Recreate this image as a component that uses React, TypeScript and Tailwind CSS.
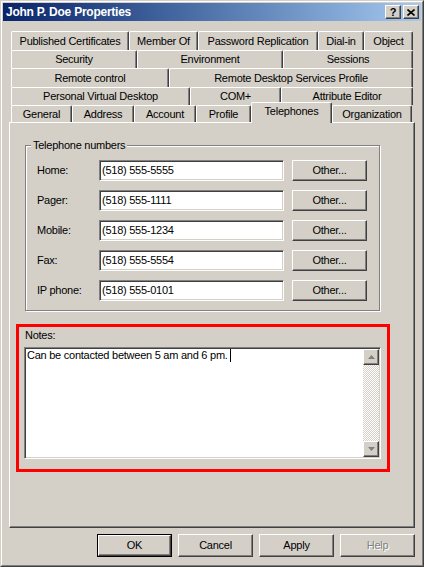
import React from 'react';

const raised =
  'border border-t-white border-l-white border-r-[#404040] border-b-[#404040] shadow-[inset_-1px_-1px_0_#808080]';
const sunken =
  'border border-t-[#808080] border-l-[#808080] border-r-white border-b-white shadow-[inset_1px_1px_0_#404040,inset_-1px_-1px_0_#d4d0c8]';

type TabDef = { label: string; w: string; selected?: boolean };

const tabRows: { h: string; tabs: TabDef[] }[] = [
  {
    h: 'h-[19px]',
    tabs: [
      { label: 'Published Certificates', w: 'w-[118px]' },
      { label: 'Member Of', w: 'w-[69px]' },
      { label: 'Password Replication', w: 'w-[120px]' },
      { label: 'Dial-in', w: 'w-[46px]' },
      { label: 'Object', w: 'w-[49px]' },
    ],
  },
  {
    h: 'h-[18px]',
    tabs: [
      { label: 'Security', w: 'w-[126px]' },
      { label: 'Environment', w: 'w-[146px]' },
      { label: 'Sessions', w: 'w-[130px]' },
    ],
  },
  {
    h: 'h-[19px]',
    tabs: [
      { label: 'Remote control', w: 'w-[158px]' },
      { label: 'Remote Desktop Services Profile', w: 'w-[244px]' },
    ],
  },
  {
    h: 'h-[18px]',
    tabs: [
      { label: 'Personal Virtual Desktop', w: 'w-[179px]' },
      { label: 'COM+', w: 'w-[91px]' },
      { label: 'Attribute Editor', w: 'w-[132px]' },
    ],
  },
  {
    h: 'h-[17px]',
    tabs: [
      { label: 'General', w: 'w-[61px]' },
      { label: 'Address', w: 'w-[62px]' },
      { label: 'Account', w: 'w-[62px]' },
      { label: 'Profile', w: 'w-[55px]' },
      { label: 'Telephones', w: 'w-[81px]', selected: true },
      { label: 'Organization', w: 'w-[80px]' },
    ],
  },
];

const phones = [
  { label: 'Home:', value: '(518) 555-5555' },
  { label: 'Pager:', value: '(518) 555-1111' },
  { label: 'Mobile:', value: '(518) 555-1234' },
  { label: 'Fax:', value: '(518) 555-5554' },
  { label: 'IP phone:', value: '(518) 555-0101' },
];

function Tab({ tab }: { tab: TabDef }) {
  if (tab.selected) {
    return (
      <div
        className={`${tab.w} h-[21px] -mb-px relative z-10 bg-[#d4d0c8] flex items-center justify-center pb-[4px] border-t border-l border-r border-t-white border-l-white border-r-[#404040] shadow-[inset_-1px_0_0_#808080] rounded-t-[2px] whitespace-nowrap`}
      >
        {tab.label}
      </div>
    );
  }
  return (
    <div
      className={`${tab.w} h-full flex items-center justify-center border-t border-l border-r border-t-white border-l-white border-r-[#404040] shadow-[inset_-1px_0_0_#808080] rounded-t-[2px] whitespace-nowrap`}
    >
      {tab.label}
    </div>
  );
}

function ArrowUp() {
  return (
    <svg width="7" height="4" viewBox="0 0 7 4">
      <path d="M3.5 0L7 4H0z" fill="#808080" />
    </svg>
  );
}

function ArrowDown() {
  return (
    <svg width="7" height="4" viewBox="0 0 7 4">
      <path d="M0 0h7L3.5 4z" fill="#808080" />
    </svg>
  );
}

export default function App() {
  return (
    <div className="w-[424px] h-[567px] font-['Liberation_Sans',Arial,sans-serif] text-[11px] tracking-[-0.25px] text-black select-none">
      <div className="w-full h-full border border-t-[#d4d0c8] border-l-[#d4d0c8] border-r-[#404040] border-b-[#404040]">
        <div className="w-full h-full border border-t-white border-l-white border-r-[#808080] border-b-[#808080] bg-[#d4d0c8] p-px flex flex-col">
          {/* Title bar */}
          <div className="h-[18px] shrink-0 flex items-center justify-between bg-linear-to-r from-[#0a246a] to-[#a6caf0] pl-[3px] pr-[2px]">
            <span className="text-white font-bold text-[12px] tracking-[-0.25px]">John P. Doe Properties</span>
            <div className="flex gap-[2px]">
              <div className={`w-[16px] h-[14px] bg-[#d4d0c8] flex items-center justify-center font-bold text-[11px] leading-none ${raised}`}>
                ?
              </div>
              <div className={`w-[16px] h-[14px] bg-[#d4d0c8] flex items-center justify-center ${raised}`}>
                <svg width="8" height="7" viewBox="0 0 8 7">
                  <path d="M0.5 0.5L7.5 6.5M7.5 0.5L0.5 6.5" stroke="black" strokeWidth="1.6" />
                </svg>
              </div>
            </div>
          </div>

          {/* Body */}
          <div className="flex flex-col pl-[6px] pt-[10px]">
            {/* Tab rows */}
            <div className="w-[406px] flex flex-col">
              {tabRows.map((row, i) => (
                <div key={i} className={`${row.h} flex items-end ml-[2px]`}>
                  {row.tabs.map(t => (
                    <Tab key={t.label} tab={t} />
                  ))}
                </div>
              ))}
            </div>

            {/* Tab panel */}
            <div className={`w-[406px] h-[406px] flex flex-col ${raised}`}>
              {/* Telephone numbers group */}
              <div className="relative ml-[15px] mt-[22px] w-[355px] h-[166px] border border-[#808080] shadow-[inset_1px_1px_0_#fff,1px_1px_0_#fff] pl-[11px] pt-[14px] flex flex-col gap-[9px]">
                <span className="absolute left-[5px] top-[-7px] px-[2px] bg-[#d4d0c8] leading-[13px]">
                  Telephone numbers
                </span>
                {phones.map(p => (
                  <div key={p.label} className="flex items-center h-[21px]">
                    <span className="w-[62px]">{p.label}</span>
                    <div className={`w-[185px] h-[21px] bg-white flex items-center pl-[2px] ${sunken}`}>
                      {p.value}
                    </div>
                    <div className={`ml-[8px] w-[75px] h-[21px] flex items-center justify-center ${raised}`}>
                      Other...
                    </div>
                  </div>
                ))}
              </div>

              {/* Notes (highlighted) */}
              <div className="ml-[6px] mt-[13px] w-[374px] h-[148px] border-[3px] border-[#ff0000] flex flex-col">
                <span className="pl-[6px] mt-[2px] leading-[13px]">Notes:</span>
                <div className={`ml-[5px] mt-[5px] w-[357px] h-[112px] bg-white flex p-px ${sunken}`}>
                  <div className="flex-1 pl-[1px] leading-[13px]">
                    Can be contacted between 5 am and 6 pm.
                    <span className="inline-block w-px h-[13px] bg-black align-top ml-[2px]" />
                  </div>
                  <div className="w-[16px] h-full flex flex-col bg-[image:repeating-conic-gradient(#d4d0c8_0_25%,#ffffff_0_50%)] bg-[length:2px_2px]">
                    <div className={`w-[16px] h-[16px] bg-[#d4d0c8] flex items-center justify-center ${raised}`}>
                      <ArrowUp />
                    </div>
                    <div className="flex-1" />
                    <div className={`w-[16px] h-[16px] bg-[#d4d0c8] flex items-center justify-center ${raised}`}>
                      <ArrowDown />
                    </div>
                  </div>
                </div>
              </div>
            </div>

            {/* Dialog buttons */}
            <div className="w-[406px] mt-[6px] flex justify-end gap-[6px]">
              <div className="w-[75px] h-[23px] border border-black">
                <div className={`w-full h-full flex items-center justify-center ${raised}`}>OK</div>
              </div>
              <div className={`w-[75px] h-[23px] flex items-center justify-center ${raised}`}>Cancel</div>
              <div className={`w-[75px] h-[23px] flex items-center justify-center ${raised}`}>Apply</div>
              <div className={`w-[75px] h-[23px] flex items-center justify-center text-[#808080] [text-shadow:1px_1px_0_#fff] ${raised}`}>
                Help
              </div>
            </div>
          </div>
        </div>
      </div>
    </div>
  );
}
